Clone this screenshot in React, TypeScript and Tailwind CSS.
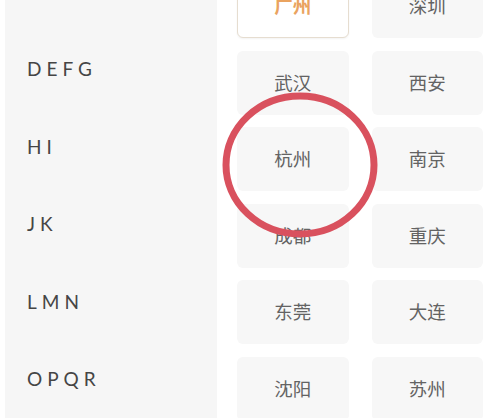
const letters = ["DEFG", "HI", "JK", "LMN", "OPQR"];

const cities = [
  "广州", "深圳",
  "武汉", "西安",
  "杭州", "南京",
  "成都", "重庆",
  "东莞", "大连",
  "沈阳", "苏州",
];

const App = () => {
  return (
    <div className="relative w-[486px] h-[418px] overflow-hidden bg-white flex">
      <div className="w-[5px] shrink-0" />
      <div className="w-[212px] shrink-0 bg-[#f6f6f6] flex flex-col pt-[31px]">
        {letters.map((l) => (
          <div
            key={l}
            className="h-[77.7px] flex items-center pl-[22px] text-[19px] tracking-[5px] text-[#454545] font-['Lato','Liberation_Sans',sans-serif]"
          >
            {l}
          </div>
        ))}
      </div>
      <div className="flex-1 pl-[20px] pr-[3px]">
        <div className="-mt-[26px] grid grid-cols-2 gap-x-[23px] gap-y-[12.5px] font-['Noto_Sans_CJK_SC',sans-serif]">
          {cities.map((c, i) =>
            i === 0 ? (
              <div
                key={c}
                className="h-[64px] rounded-[6px] border border-[#e6ddd0] bg-white shadow-[0_1px_2px_rgba(0,0,0,0.05)] flex items-center justify-center text-[18.5px] font-bold text-[#eaa35f]"
              >
                {c}
              </div>
            ) : (
              <div
                key={c}
                className="h-[64px] rounded-[6px] bg-[#f7f7f7] flex items-center justify-center text-[18.5px] text-[#636363]"
              >
                {c}
              </div>
            )
          )}
        </div>
      </div>
      <svg
        className="absolute left-[218px] top-[88px]"
        width="164"
        height="154"
        viewBox="0 0 164 154"
      >
        <ellipse
          cx="82"
          cy="77"
          rx="74"
          ry="69"
          fill="none"
          stroke="#d9515e"
          strokeWidth="7"
        />
      </svg>
    </div>
  );
};

export default App;
